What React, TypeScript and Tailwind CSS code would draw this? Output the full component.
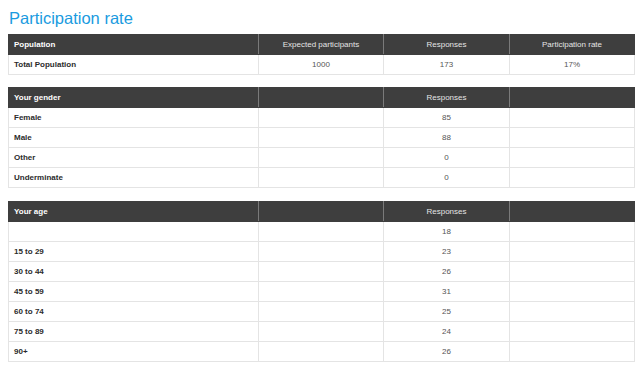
import React from "react";

type Section = {
    title: string;
    columns: string[];
    rows: string[][];
    gap: string;
};

const sections: Section[] = [
    {
        title: "Population",
        columns: ["Expected participants", "Responses", "Participation rate"],
        rows: [["Total Population", "1000", "173", "17%"]],
        gap: "mb-[12px]",
    },
    {
        title: "Your gender",
        columns: ["", "Responses", ""],
        rows: [
            ["Female", "", "85", ""],
            ["Male", "", "88", ""],
            ["Other", "", "0", ""],
            ["Underminate", "", "0", ""],
        ],
        gap: "mb-[13px]",
    },
    {
        title: "Your age",
        columns: ["", "Responses", ""],
        rows: [
            ["", "", "18", ""],
            ["15 to 29", "", "23", ""],
            ["30 to 44", "", "26", ""],
            ["45 to 59", "", "31", ""],
            ["60 to 74", "", "25", ""],
            ["75 to 89", "", "24", ""],
            ["90+", "", "26", ""],
        ],
        gap: "mb-0",
    },
];

const ResultTable = ({ section }: { section: Section }) => {
    return (
        <table className={`w-[626px] table-fixed border-collapse text-[8px] ${section.gap}`}>
            <colgroup>
                <col className="w-[250px]" />
                <col className="w-[125px]" />
                <col className="w-[126px]" />
                <col className="w-[125px]" />
            </colgroup>
            <thead>
                <tr className="h-[20px] bg-[#3e3e3e]">
                    <th className="border border-[#3e3e3e] border-r-[#7a7a7a] px-[5px] text-left font-bold text-white">
                        {section.title}
                    </th>
                    {section.columns.map((c, i) => (
                        <th
                            key={i}
                            className={
                                i < section.columns.length - 1
                                    ? "border border-[#3e3e3e] border-r-[#7a7a7a] text-center font-normal text-[#e4e4e4]"
                                    : "border border-[#3e3e3e] text-center font-normal text-[#e4e4e4]"
                            }
                        >
                            {c}
                        </th>
                    ))}
                </tr>
            </thead>
            <tbody>
                {section.rows.map((row, r) => (
                    <tr key={r} className="h-[20px] bg-white">
                        {row.map((cell, i) => (
                            <td
                                key={i}
                                className={
                                    i === 0
                                        ? "border border-[#e4e4e4] px-[5px] font-bold text-[#2b2b2b]"
                                        : "border border-[#e4e4e4] text-center text-[#555555]"
                                }
                            >
                                {cell}
                            </td>
                        ))}
                    </tr>
                ))}
            </tbody>
        </table>
    );
};

export default function App() {
    return (
        <div className="w-[640px] h-[369px] bg-white pl-[8px] font-['Liberation_Sans',Arial,sans-serif] overflow-hidden">
            <h1 className="pt-[10px] pl-[1px] h-[34px] text-[16.5px] leading-none font-normal text-[#1a9be0]">
                Participation rate
            </h1>
            {sections.map((s) => (
                <ResultTable key={s.title} section={s} />
            ))}
        </div>
    );
}
